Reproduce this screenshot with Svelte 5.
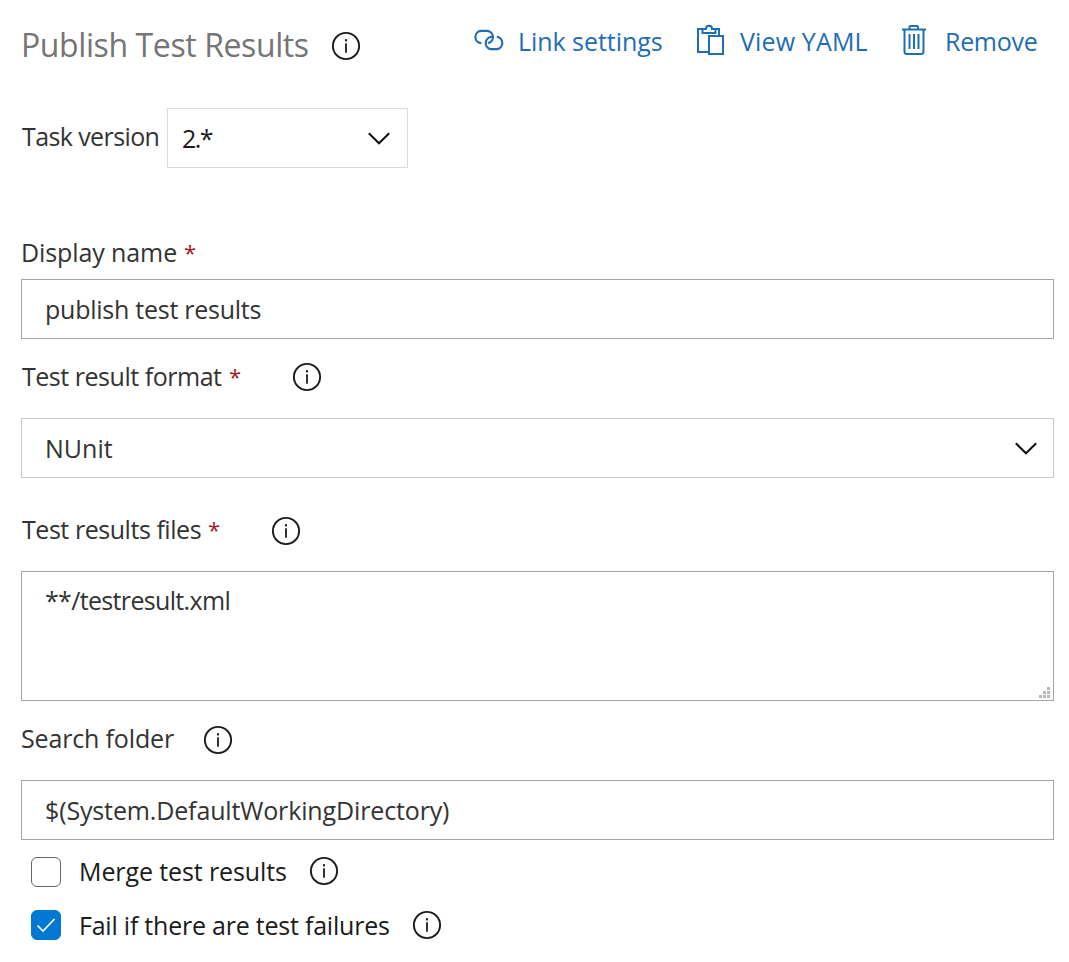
<script>
  let displayName = $state('publish test results');
  let merge = $state(false);
  let failOnFailures = $state(true);
</script>

{#snippet info()}
  <svg class="info" width="30" height="30" viewBox="0 0 30 30" role="img" aria-label="Info">
    <circle cx="15" cy="15" r="13.1" fill="none" stroke="#1b1b1b" stroke-width="1.9" />
    <rect x="14" y="8.2" width="2" height="2.2" fill="#1b1b1b" />
    <rect x="14.1" y="12.3" width="1.8" height="9.4" fill="#1b1b1b" />
  </svg>
{/snippet}

{#snippet chevron()}
  <svg class="chevron" width="24" height="14" viewBox="0 0 24 14" aria-hidden="true">
    <path d="M1.8 2.300 12 12.300 22.2 2.300" fill="none" stroke="#111" stroke-width="2" />
  </svg>
{/snippet}

<main>
  <header>
    <h1>Publish Test Results</h1>
    {@render info()}
    <nav>
      <button class="link">
        <svg width="32" height="22" viewBox="0 0 32 22" fill="none" stroke="#1f6db5" stroke-width="2.200">
          <path d="M8.4 14.2H7.8A6.2 6.2 0 0 1 7.8 1.900H14.4A6.2 6.2 0 0 1 15.2 14.1" />
          <path d="M18.9 7.900A6.2 6.2 0 0 0 17.4 20.1H24.2A6.2 6.2 0 0 0 24.2 7.900H23.8" />
        </svg>
        <span>Link settings</span>
      </button>
      <button class="yaml">
        <svg width="28" height="32" viewBox="0 0 28 32" fill="none" stroke="#1f6db5" stroke-width="2">
          <path d="M12 28H2V5H6.5M19.500 5H23V12" />
          <path d="M6.500 9V5H10C10 .8 16 .8 16 5H19.500V9Z" />
          <rect x="13" y="12" width="14" height="18" />
        </svg>
        <span>View YAML</span>
      </button>
      <button class="remove">
        <svg width="26" height="32" viewBox="0 0 26 32" fill="none" stroke="#1f6db5" stroke-width="2">
          <path d="M1 5.500H25M8.500 5V3Q8.500 2 9.500 2H16Q17 2 17 3V5M3.500 5.500V27.500Q3.500 30 6 30H20Q22.500 30 22.500 27.500V5.500" />
          <path d="M8.500 10V25M13 10V25M17.500 10V25" />
        </svg>
        <span>Remove</span>
      </button>
    </nav>
  </header>

  <div class="version">
    <label for="version">Task version</label>
    <div class="select light" id="version"><span>2.*</span>{@render chevron()}</div>
  </div>

  <div class="line display">
    <label for="display">Display name</label><b>*</b>
  </div>
  <input id="display" class="box" bind:value={displayName} />

  <div class="line format">
    <span class="t">Test result format</span><b>*</b>{@render info()}
  </div>
  <div class="select"><span>NUnit</span>{@render chevron()}</div>

  <div class="line files">
    <span class="t">Test results files</span><b>*</b>{@render info()}
  </div>
  <div class="box area">
    <span>**/testresult.xml</span>
    <svg class="grip" width="11" height="11" viewBox="0 0 11 11" fill="#b9b9b9" aria-hidden="true">
      <path d="M8 0h3v3H8zM4 4h3v3H4zM8 4h3v3H8zM0 8h3v3H0zM4 8h3v3H4zM8 8h3v3H8z" />
    </svg>
  </div>

  <div class="line search">
    <span>Search folder</span>{@render info()}
  </div>
  <div class="box folder"><span>$(System.DefaultWorkingDirectory)</span></div>

  <div class="check merge">
    <button class="tick" role="checkbox" aria-checked={merge} aria-label="Merge test results" class:on={merge} onclick={() => (merge = !merge)}>
      {#if merge}<svg width="20" height="16" viewBox="0 0 20 16"><path d="M1.500 8.500 7 14 18.500 2" /></svg>{/if}
    </button>
    <span>Merge test results</span>{@render info()}
  </div>
  <div class="check fail">
    <button class="tick" role="checkbox" aria-checked={failOnFailures} aria-label="Fail if there are test failures" class:on={failOnFailures} onclick={() => (failOnFailures = !failOnFailures)}>
      {#if failOnFailures}<svg width="20" height="16" viewBox="0 0 20 16"><path d="M1.500 8.500 7 14 18.500 2" /></svg>{/if}
    </button>
    <span>Fail if there are test failures</span>{@render info()}
  </div>
</main>

<style>
  :global(body) { margin: 0; background: #fff; }
  main {
    box-sizing: border-box;
    width: 1069px;
    height: 962px;
    padding: 0 15px 0 21px;
    overflow: hidden;
    font: 25px/34px 'Open Sans', 'Noto Sans', sans-serif;
    color: #333;
    white-space: nowrap;
  }
  svg { display: block; flex: none; }
  button { border: 0; padding: 0; background: none; font: inherit; color: inherit; cursor: pointer; }
  header { display: flex; height: 108px; align-items: flex-start; }
  h1 { margin: 23px 0 0; width: 310px; font-size: 32px; line-height: 44px; font-weight: 400; letter-spacing: -.4px; color: #757575; }
  header .info { margin-top: 31px; }
  nav { display: flex; margin: 24px 0 0 112px; color: #1f6db5; }
  nav button { display: flex; height: 34px; }
  .link { width: 222px; }
  .link svg { margin: 5px 13px 0 0; }
  .link span { letter-spacing: -.05px; }
  .yaml { width: 206px; }
  .yaml svg { margin: 0 16px 0 1px; }
  .yaml span { letter-spacing: .14px; }
  .remove svg { margin: 0 18px 0 0; }
  .remove span { letter-spacing: -.3px; }

  .version { display: flex; height: 127px; }
  .version label { width: 145px; margin: 11px 0 0 1px; letter-spacing: -.6px; }
  .version .select { width: 241px; padding: 0 16px 0 14px; color: #1b1b1b; }
  .version .select span { letter-spacing: -1.500px; }
  .box, .select {
    display: flex;
    box-sizing: border-box;
    align-items: center;
    width: 100%;
    height: 60px;
    padding: 0 15px 0 23px;
    border: 1px solid #a6a6a6;
    border-radius: 0;
    background: #fff;
  }
  .select { justify-content: space-between; border-color: #c8c8c8; }
  .light { border-color: #dadada; }
  input { display: block; font: inherit; color: inherit; outline: 0; letter-spacing: -.25px; }

  .line { display: flex; height: 34px; }
  .line b { font-size: 22px; font-weight: 400; color: #a01c1c; }
  .display { height: 44px; }
  .display label { width: 163px; letter-spacing: -.1px; }
  .format { margin-top: 20px; height: 59px; }
  .format .t { width: 207px; margin-left: 1px; letter-spacing: -.47px; }
  .format b { width: 41px; }
  .format .info { margin: 3px 0 0 22px; }
  .files { margin-top: 34px; height: 59px; }
  .files .t { width: 186px; margin-left: 1px; letter-spacing: -.45px; }
  .files b { width: 41px; }
  .files .info { margin: 4px 0 0 22px; }
  .area { height: 130px; align-items: flex-start; justify-content: space-between; padding: 11px 3px 2px 23px; }
  .area span { letter-spacing: -.66px; }
  .grip { align-self: flex-end; }
  .search { margin-top: 20px; height: 59px; }
  .search span { width: 182px; letter-spacing: -.15px; }
  .search .info { margin-top: 4px; }
  .folder { padding-bottom: 1px; }
  .folder span { letter-spacing: -.14px; }

  .check { display: flex; height: 34px; color: #1b1b1b; }
  .merge { margin-top: 14px; height: 54px; }
  .check span { margin-left: 18px; }
  .check .info { margin-top: 2px; }
  .merge span { width: 230px; letter-spacing: -.11px; }
  .fail span { width: 333px; letter-spacing: -.22px; }
  .tick {
    display: flex;
    box-sizing: border-box;
    align-items: center;
    justify-content: center;
    width: 30px;
    height: 30px;
    margin: 3px 0 0 10px;
    border: 1px solid #666;
    border-radius: 6px;
    background: #fff;
  }
  .tick path { fill: none; stroke: #fff; stroke-width: 1.700; }
  .on { border-color: #0078d4; background: #0078d4; }
  .fail .tick { margin-top: 2px; }
</style>
